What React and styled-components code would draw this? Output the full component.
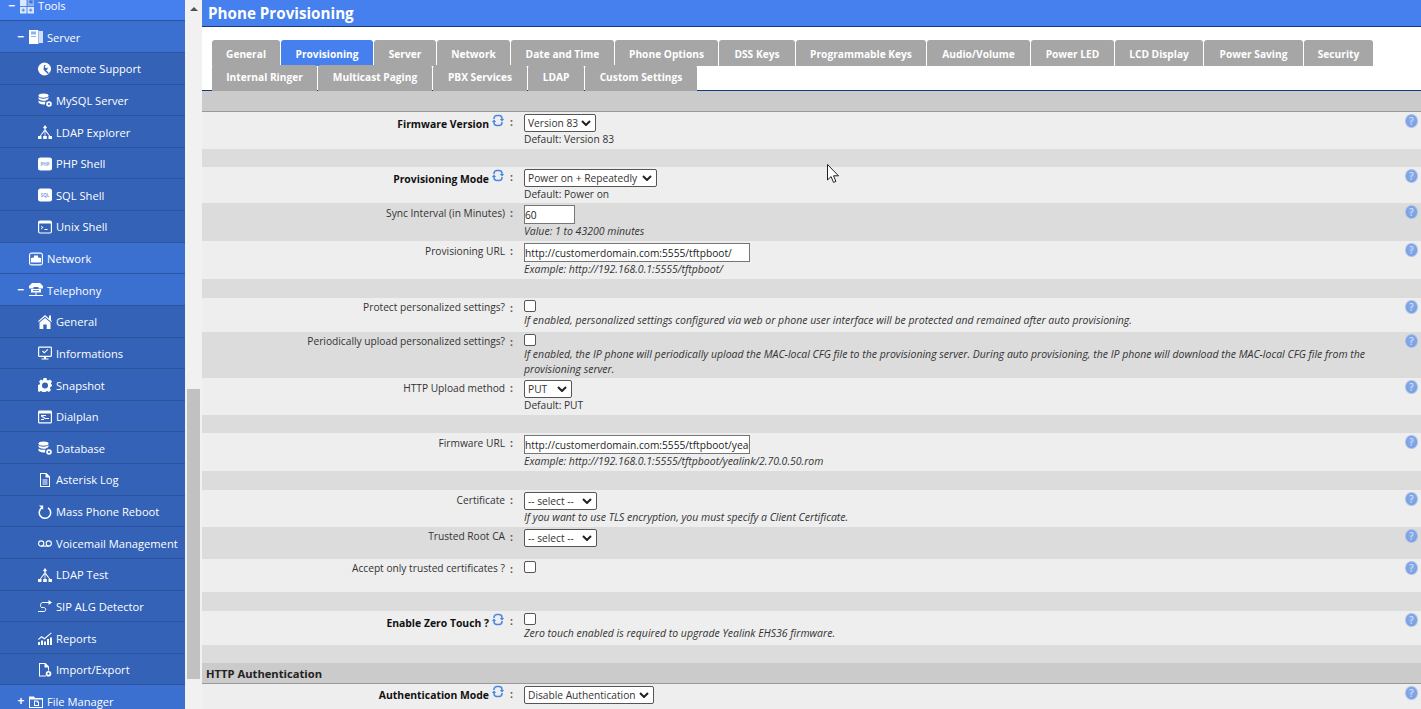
import styled, {createGlobalStyle} from 'styled-components';

const Global = createGlobalStyle`
    html, body {
        margin: 0;
        height: 100%;
        overflow: hidden;
        background: #fff;
    }
    body {
        font-family: "Open Sans", "Noto Sans", sans-serif;
        font-size: 10.2px;
        color: #333;
    }
`;

const Page = styled.div`
    display: grid;
    grid-template-columns: 185px 17px 1fr;
    height: 709px;
    overflow: hidden;
`;

/* sidebar */
const Sidebar = styled.nav`
    background: #3362b6;
    overflow: hidden;
`;

const NavList = styled.div`
    margin-top: -10.3px;
`;

const levelBg = {1: '#4680ee', 2: '#3b70d0', 3: '#3362b6'};
const levelPad = {1: 8, 2: 17, 3: 26};

const NavRow = styled.div`
    display: flex;
    align-items: center;
    box-sizing: border-box;
    height: 31.64px;
    padding: 1px 0 0 ${p => levelPad[p.$level]}px;
    background: ${p => levelBg[p.$level]};
    border-bottom: 1px solid #2c549f;
    color: #fff;
    font-size: 11.15px;
    white-space: nowrap;
`;

const Toggle = styled.span`
    box-sizing: border-box;
    width: 12px;
    flex: none;
    padding-right: 4px;
    font-size: 12px;
    font-weight: 700;
    line-height: 12px;
    text-align: center;
`;

const NavIcon = styled.span`
    display: flex;
    width: 14px;
    height: 14px;
    margin-right: 4px;
    flex: none;
`;

const Scrollbar = styled.div`
    background: #f1f1f1;
    display: flex;
    flex-direction: column;
    align-items: center;
`;

const ScrollArrow = styled.div`
    margin-top: 7px;
    border-left: 4px solid transparent;
    border-right: 4px solid transparent;
    border-bottom: 4px solid #505050;
`;

const ScrollThumb = styled.div`
    margin-top: 378px;
    width: 13px;
    height: 290px;
    background: #c1c1c1;
`;

/* main panel */
const Main = styled.main`
    position: relative;
    min-width: 0;
    overflow: hidden;
`;

const TitleBar = styled.h1`
    margin: 0;
    box-sizing: border-box;
    height: 27px;
    padding-left: 6px;
    background: #4680ee;
    border-bottom: 1px solid #123a7c;
    color: #fff;
    font-size: 15.2px;
    font-weight: 700;
    line-height: 26px;
`;

const TabBar = styled.div`
    display: flex;
    flex-wrap: wrap;
    box-sizing: border-box;
    height: 64px;
    padding: 13px 0 0 10px;
    border-bottom: 1px solid #123a7c;
    align-content: flex-start;
`;

const Tab = styled.div`
    box-sizing: border-box;
    width: ${p => p.$w}px;
    height: 26px;
    margin: 0 1px -1px 0;
    border-radius: 3px 3px 0 0;
    background: ${p => (p.$active ? '#4680ee' : '#a6a6a6')};
    color: #fff;
    font-size: 10.2px;
    font-weight: 700;
    line-height: ${p => (p.$low ? 24 : 28)}px;
    text-align: center;
    white-space: nowrap;
`;

const Section = styled.div`
    box-sizing: border-box;
    height: ${p => p.$h}px;
    padding-left: 4px;
    background: #cbcbcb;
    border-bottom: 1px solid #999;
    color: #222;
    font-size: 11.2px;
    font-weight: 700;
    line-height: 21px;
`;

const Spacer = styled.div`
    height: ${p => p.$h}px;
    background: #dcdcdc;
`;

const Row = styled.div`
    display: grid;
    grid-template-columns: 303px 19px 1fr 16px;
    box-sizing: border-box;
    height: ${p => p.$h}px;
    padding-top: 2px;
    background: ${p => (p.$alt ? '#dcdcdc' : '#eeeeee')};
`;

const Label = styled.div`
    display: flex;
    justify-content: flex-end;
    align-items: flex-start;
    gap: 3px;
    padding-top: ${p => p.$top}px;
    padding-right: ${p => (p.$bold ? 1 : 0)}px;
    color: ${p => (p.$bold ? '#111' : '#333')};
    font-size: ${p => (p.$bold ? 10.4 : 10.2)}px;
    font-weight: ${p => (p.$bold ? 700 : 400)};
    line-height: 15px;
    white-space: nowrap;
`;

const Colon = styled.div`
    padding: 1px 0 0 5px;
    color: #555;
    font-weight: 700;
    line-height: 15px;
`;

const Field = styled.div`
    min-width: 0;
    padding-right: 5px;
    line-height: 15px;
`;

const Hint = styled.div`
    margin-top: ${p => p.$mt ?? 0}px;
    color: #333;
    line-height: 15px;
`;

const ItalicHint = styled(Hint)`
    font-size: 10.5px;
    font-style: italic;
`;

const chevron = "url(\"data:image/svg+xml,%3Csvg xmlns='http://www.w3.org/2000/svg' width='10' height='6'%3E%3Cpath d='M1 1l4 4 4-4' fill='none' stroke='%23222' stroke-width='2'/%3E%3C/svg%3E\")";

const Select = styled.select`
    display: block;
    box-sizing: border-box;
    width: ${p => p.$w}px;
    height: 18px;
    padding: 0 0 0 3px;
    appearance: none;
    background: #fff ${chevron} no-repeat right 4px center;
    border: 1px solid #555;
    border-radius: 2px;
    color: #333;
    font: 10.2px "Open Sans", sans-serif;
`;

const Input = styled.input`
    display: block;
    box-sizing: border-box;
    width: ${p => p.$w}px;
    height: 19px;
    padding: 0;
    background: #fff;
    border: 1px solid #767676;
    border-radius: 0;
    outline: none;
    color: #222;
    font: 10.2px "Open Sans", sans-serif;
`;

const Check = styled.span`
    display: block;
    box-sizing: border-box;
    width: 12px;
    height: 12px;
    background: #fff;
    border: 1px solid #555;
    border-radius: 2px;
`;

const Help = styled.span`
    display: block;
    width: 13px;
    height: 14px;
    box-sizing: border-box;
    border-radius: 50%;
    background: radial-gradient(circle at 50% 45%, #8fb0ec, #6d96de);
    border: 1px solid #a9bfe6;
    color: #dce7fb;
    font-size: 10px;
    line-height: 12px;
    text-align: center;
`;

const Pointer = styled.svg`
    position: absolute;
    left: 625px;
    top: 164px;
`;

const RefreshIcon = styled.svg`
    flex: none;
    margin-top: -3px;
`;

const Svg = ({children}) => (
    <svg viewBox="0 0 14 14" width="14" height="14" fill="#fff">{children}</svg>
);

const DbShape = () => (
    <>
        <ellipse cx="5.5" cy="2.6" rx="5" ry="2.2" />
        <path d="M.5 4v1.6c0 1.2 2.2 2.2 5 2.2 1 0 1.8-.1 2.6-.4l2-1.2c.3-.2.4-.4.4-.6V4c-.8 1-2.8 1.7-5 1.7S1.300 5 .5 4z" />
        <path d="M.5 7.500v1.800c0 1.200 2.200 2.200 5 2.200l1.500-.1.300-2.800-1.800.1c-2.200 0-4.200-.3-5-1.200z" />
    </>
);

const Gear = ({x = 11, y = 11}) => (
    <>
        <circle cx={x} cy={y} r="2.800" />
        <circle cx={x} cy={y} r="1.100" fill="#3362b6" />
    </>
);

const Tree = () => (
    <svg viewBox="0 0 14 14" width="14" height="14" fill="#fff">
        <path d="M7 0l2 2.800-1.500 1v2.700h-1V3.800L5 2.800z" />
        <path d="M6.600 6h.8v5h-.8z" />
        <path d="M6.500 4.500l1 .7-4.700 5.800H1.800zM7.500 4.500l-1 .7 4.700 5.800h1z" />
        <path d="M0 11h3.500v3H0zM5.200 11h3.600v3H5.200zM10.500 11H14v3h-3.500z" />
    </svg>
);

const Badge = ({text}) => (
    <Svg>
        <rect x="0" y="0.500" width="14" height="13" rx="2.500" />
        <text x="7" y="9" textAnchor="middle" fontSize="4.500" fontWeight="700" fill="#7f9fd8">{text}</text>
    </Svg>
);

const icons = {
    tools: (
        <svg viewBox="0 0 15 15" width="15" height="15" fill="#fff">
            <rect x="0" y="0" width="7" height="7" fill="#dbe7fb" />
            <rect x="8" y="0" width="7" height="7" fill="#8fb2ee" />
            <rect x="10" y="1" width="3.500" height="3" fill="#3f72d4" />
            <rect x="0" y="8" width="7" height="7" fill="#dbe7fb" />
            <rect x="8" y="8" width="7" height="7" fill="#dbe7fb" />
            <path d="M3.500 9.500l2 2-2 2-2-2zM11.500 9.500l2 2-2 2-2-2z" fill="#6d9be8" />
        </svg>
    ),
    server: (
        <Svg>
            <rect x="0" y="0" width="9.500" height="14" />
            <rect x="10" y="1" width="4" height="12" fill="#cfe0fb" />
            <rect x="2" y="1.500" width="5" height="3" fill="#8fb2ee" />
            <rect x="2" y="6" width="5" height="1" fill="#8fb2ee" />
        </Svg>
    ),
    remote: (
        <Svg>
            <circle cx="6.500" cy="7" r="6.500" />
            <path d="M6 3l1.800.4L6.700 5l1 1.200 1.800-.8.200 1.600-1.700 1.200L11 11l-1 1-3-2.800L5.500 7.500z" fill="#3362b6" />
        </Svg>
    ),
    db: (
        <Svg>
            <DbShape />
            <Gear />
        </Svg>
    ),
    tree: <Tree />,
    php: <Badge text="PHP" />,
    sql: <Badge text="SQL" />,
    unix: (
        <Svg>
            <path fillRule="evenodd" d="M2 .500h10c1.100 0 2 .900 2 2v9c0 1.100-.900 2-2 2H2c-1.100 0-2-.900-2-2v-9c0-1.100.900-2 2-2zm-.800 3v8.200c0 .400.300.700.700.700h10.200c.400 0 .700-.300.700-.700V3.500z" />
            <path d="M3 5.500l2.500 2L3 9.500V8.500l1.300-1L3 6.500zM6.500 9h3v1h-3z" />
        </Svg>
    ),
    network: (
        <Svg>
            <path fillRule="evenodd" d="M2.500.500h9c1.400 0 2.500 1.100 2.500 2.500v8c0 1.400-1.100 2.500-2.500 2.500h-9C1.100 13.500 0 12.400 0 11V3C0 1.600 1.100.500 2.500.500zm-.300 1.200c-.600 0-1 .400-1 1v8.600c0 .600.400 1 1 1h9.600c.600 0 1-.400 1-1V2.700c0-.600-.400-1-1-1z" />
            <path d="M5 3.500h4v2h1.500V6H12v4.500H2V6h1.500v-.500H5z" />
        </Svg>
    ),
    telephony: (
        <Svg>
            <path d="M3 0h8l3 3v2.500H9.500V4h-5v1.500H0V3z" />
            <path d="M2 6h10v3.500H2z" />
            <rect x="4" y="7" width="6" height=".8" fill="#3b70d0" />
            <rect x="6.500" y="9.500" width="1" height="3" />
            <rect x="0" y="12" width="14" height="1" />
        </Svg>
    ),
    general: (
        <Svg>
            <path d="M11 .500h2v4.700l1 1-.7.800L7 1.800.7 7 0 6.200 7 0l4 3.400z" />
            <path fillRule="evenodd" d="M7 3l5.500 4.600V14H8.700V9.500H5.300V14H1.500V7.600z" />
        </Svg>
    ),
    info: (
        <Svg>
            <path fillRule="evenodd" d="M1.500 .500h11c.800 0 1.500.700 1.500 1.500v7.500c0 .800-.700 1.500-1.500 1.500h-11C.700 11 0 10.300 0 9.500V2C0 1.200.700.500 1.500.500zm-.300 1.200v8h11.600v-8z" />
            <path d="M4 5.500l1-1 1.300 1.400L9.500 3l.8.800-4 3.800zM6 11h2v1.500h2.500v1h-7v-1H6z" />
        </Svg>
    ),
    snapshot: (
        <Svg>
            <path fillRule="evenodd" d="M5.500 0h3l.4 2 1.300.6 1.800-1.100 2 2-1.100 1.800.6 1.300L14 7v1l-1.500.9-.6 1.300 1.100 1.800-2 2-1.800-1.100-1.300.6-.4 1h-3l-.4-1-1.300-.6-1.800 1.100-2-2 1.100-1.800-.6-1.300L0 8V7l1.500-.4.600-1.300L1 3.500l2-2 1.800 1.100L5.100 2zM7 4.500a3 3 0 100 6 3 3 0 000-6z" />
        </Svg>
    ),
    dialplan: (
        <Svg>
            <path fillRule="evenodd" d="M1.500 .500h11c.800 0 1.500.700 1.500 1.500v10c0 .800-.700 1.500-1.500 1.500h-11C.700 13.500 0 12.800 0 12V2C0 1.200.700.500 1.500.500zm-.300 3v8.800h11.600V3.500z" />
            <path d="M3 5h5v1H4.500l3 2H11v1H7L3 6.500zM3 9h3v1H3z" />
        </Svg>
    ),
    log: (
        <Svg>
            <path fillRule="evenodd" d="M2 0h6.500L12 3.500V14H2zm1 1v12h8V4.500H7.500V1zM4.500 6.500h5v1h-5zm0 2h5v1h-5zm0 2h5v1h-5z" />
        </Svg>
    ),
    reboot: (
        <svg viewBox="0 0 14 14" width="14" height="14" fill="none" stroke="#fff" strokeWidth="1.500">
            <path d="M4.500 2.500a5.700 5.700 0 105.500.300" />
            <path d="M1 .500h4.200v4.300z" fill="#fff" stroke="none" />
        </svg>
    ),
    voicemail: (
        <svg viewBox="0 0 14 14" width="14" height="14" fill="none" stroke="#fff" strokeWidth="1.100">
            <circle cx="3.200" cy="7.500" r="2.600" />
            <circle cx="10.800" cy="7.500" r="2.600" />
            <path d="M3.200 10.100h7.600" />
        </svg>
    ),
    sip: (
        <svg viewBox="0 0 14 14" width="14" height="14" fill="none" stroke="#fff" strokeWidth="1">
            <path d="M0 12.500h6c2.500 0 2.500-4-.5-4H4C1.500 8.500 2 3.500 5 3.500h6" />
            <path d="M10.500 1l3.500 2.500L10.500 6z" fill="#fff" stroke="none" />
        </svg>
    ),
    reports: (
        <Svg>
            <path d="M0 11h2v3H0zM3 9.500h2V14H3zM6 10.500h2V14H6zM9 8h2v6H9zM12 6.500h2V14h-2z" />
            <path d="M0 8l3.500-3 3 2L13 1.500l.7.800L6.500 8.500l-3-2L.7 9z" />
        </Svg>
    ),
    importExport: (
        <Svg>
            <path fillRule="evenodd" d="M1 0h6.500L11 3.500v4h-1V4.500H6.500V1H2v11.500h6v1H1z" />
            <Gear x={10.500} y={10.700} />
        </Svg>
    ),
    files: (
        <Svg>
            <path fillRule="evenodd" d="M0 2.500h5l1 1.500h8v10H0zm1 3v7.500h12V5.500z" />
            <path fillRule="evenodd" d="M5 6.500h3.500L10 8v4H5zm1 1v3.500h3V8.500H7.800V7.500z" />
        </Svg>
    ),
};

const navItems = [
    ['Tools', 'tools', 1, '−'],
    ['Server', 'server', 2, '−'],
    ['Remote Support', 'remote', 3],
    ['MySQL Server', 'db', 3],
    ['LDAP Explorer', 'tree', 3],
    ['PHP Shell', 'php', 3],
    ['SQL Shell', 'sql', 3],
    ['Unix Shell', 'unix', 3],
    ['Network', 'network', 2],
    ['Telephony', 'telephony', 2, '−'],
    ['General', 'general', 3],
    ['Informations', 'info', 3],
    ['Snapshot', 'snapshot', 3],
    ['Dialplan', 'dialplan', 3],
    ['Database', 'db', 3],
    ['Asterisk Log', 'log', 3],
    ['Mass Phone Reboot', 'reboot', 3],
    ['Voicemail Management', 'voicemail', 3],
    ['LDAP Test', 'tree', 3],
    ['SIP ALG Detector', 'sip', 3],
    ['Reports', 'reports', 3],
    ['Import/Export', 'importExport', 3],
    ['File Manager', 'files', 2, '+'],
];

const tabs = [
    ['General', 68], ['Provisioning', 92], ['Server', 62], ['Network', 73], ['Date and Time', 103],
    ['Phone Options', 103], ['DSS Keys', 76], ['Programmable Keys', 130], ['Audio/Volume', 103],
    ['Power LED', 83], ['LCD Display', 88], ['Power Saving', 99], ['Security', 69],
    ['Internal Ringer', 105], ['Multicast Paging', 114], ['PBX Services', 94], ['LDAP', 56], ['Custom Settings', 112],
];

const Refresh = () => (
    <RefreshIcon viewBox="0 0 12 13" width="12" height="13" fill="none" stroke="#4a86e0" strokeWidth="1.500">
        <path d="M2 5V4.500A3 3 0 015 1.500h2A3 3 0 0110 4.500V5.500" />
        <path d="M10 8v.500a3 3 0 01-3 3H5a3 3 0 01-3-3V7.500" />
        <path d="M7.800 5h4.400L10 7.400zM-.200 8h4.400L2 5.600z" fill="#4a86e0" stroke="none" />
    </RefreshIcon>
);

const FormRow = ({label, bold, sync, h, alt, top = 0, children}) => (
    <Row $h={h} $alt={alt}>
        <Label $bold={bold} $top={top}>{label}{sync && <Refresh />}</Label>
        <Colon>:</Colon>
        <Field>{children}</Field>
        <Help>?</Help>
    </Row>
);

export default function App() {
    return (
        <Page>
            <Global />
            <Sidebar>
                <NavList>
                    {navItems.map(([text, icon, level, toggle]) => (
                        <NavRow key={text + icon} $level={level}>
                            <Toggle>{toggle}</Toggle>
                            <NavIcon>{icons[icon]}</NavIcon>
                            {text}
                        </NavRow>
                    ))}
                </NavList>
            </Sidebar>
            <Scrollbar>
                <ScrollArrow />
                <ScrollThumb />
            </Scrollbar>
            <Main>
                <TitleBar>Phone Provisioning</TitleBar>
                <TabBar>
                    {tabs.map(([text, w], i) => (
                        <Tab key={text} $w={w} $low={i > 12} $active={text === 'Provisioning'}>{text}</Tab>
                    ))}
                </TabBar>
                <Section $h={21} />
                <FormRow label="Firmware Version" bold sync h={37} top={3}>
                    <Select $w={72} defaultValue="83"><option value="83">Version 83</option></Select>
                    <Hint>Default: Version 83</Hint>
                </FormRow>
                <Spacer $h={18} />
                <FormRow label="Provisioning Mode" bold sync h={36} top={3}>
                    <Select $w={133}><option>Power on + Repeatedly</option></Select>
                    <Hint>Default: Power on</Hint>
                </FormRow>
                <FormRow label="Sync Interval (in Minutes)" h={38} alt top={1}>
                    <Input $w={51} defaultValue="60" />
                    <ItalicHint>Value: 1 to 43200 minutes</ItalicHint>
                </FormRow>
                <FormRow label="Provisioning URL" h={38} top={1}>
                    <Input $w={226} defaultValue="http://customerdomain.com:5555/tftpboot/" />
                    <ItalicHint>Example: http://192.168.0.1:5555/tftpboot/</ItalicHint>
                </FormRow>
                <Spacer $h={19} />
                <FormRow label="Protect personalized settings?" h={34}>
                    <Check />
                    <ItalicHint $mt={1}>If enabled, personalized settings configured via web or phone user interface will be protected and remained after auto provisioning.</ItalicHint>
                </FormRow>
                <FormRow label="Periodically upload personalized settings?" h={46} alt>
                    <Check />
                    <ItalicHint $mt={1}>If enabled, the IP phone will periodically upload the MAC-local CFG file to the provisioning server. During auto provisioning, the IP phone will download the MAC-local CFG file from the provisioning server.</ItalicHint>
                </FormRow>
                <FormRow label="HTTP Upload method" h={37} top={1}>
                    <Select $w={48}><option>PUT</option></Select>
                    <Hint>Default: PUT</Hint>
                </FormRow>
                <Spacer $h={18} />
                <FormRow label="Firmware URL" h={38} top={1}>
                    <Input $w={226} defaultValue="http://customerdomain.com:5555/tftpboot/yealink/2.70.0.50.rom" />
                    <ItalicHint>Example: http://192.168.0.1:5555/tftpboot/yealink/2.70.0.50.rom</ItalicHint>
                </FormRow>
                <Spacer $h={19} />
                <FormRow label="Certificate" h={37} top={1}>
                    <Select $w={73}><option>-- select --</option></Select>
                    <ItalicHint>If you want to use TLS encryption, you must specify a Client Certificate.</ItalicHint>
                </FormRow>
                <FormRow label="Trusted Root CA" h={32} alt>
                    <Select $w={73}><option>-- select --</option></Select>
                </FormRow>
                <FormRow label="Accept only trusted certificates ?" h={33}>
                    <Check />
                </FormRow>
                <Spacer $h={19} />
                <FormRow label="Enable Zero Touch ?" bold sync h={34} top={3}>
                    <Check />
                    <ItalicHint $mt={1}>Zero touch enabled is required to upgrade Yealink EHS36 firmware.</ItalicHint>
                </FormRow>
                <Spacer $h={18} />
                <Section $h={21}>HTTP Authentication</Section>
                <FormRow label="Authentication Mode" bold sync h={26} top={2}>
                    <Select $w={130}><option>Disable Authentication</option></Select>
                </FormRow>
                <Pointer width="12" height="20" viewBox="0 0 12 20">
                    <path d="M.5 .5v15.500l3.600-3.400 2.400 5.800 2.400-1-2.400-5.600h5z" fill="#fff" stroke="#222" strokeWidth="1" />
                </Pointer>
            </Main>
        </Page>
    );
}
